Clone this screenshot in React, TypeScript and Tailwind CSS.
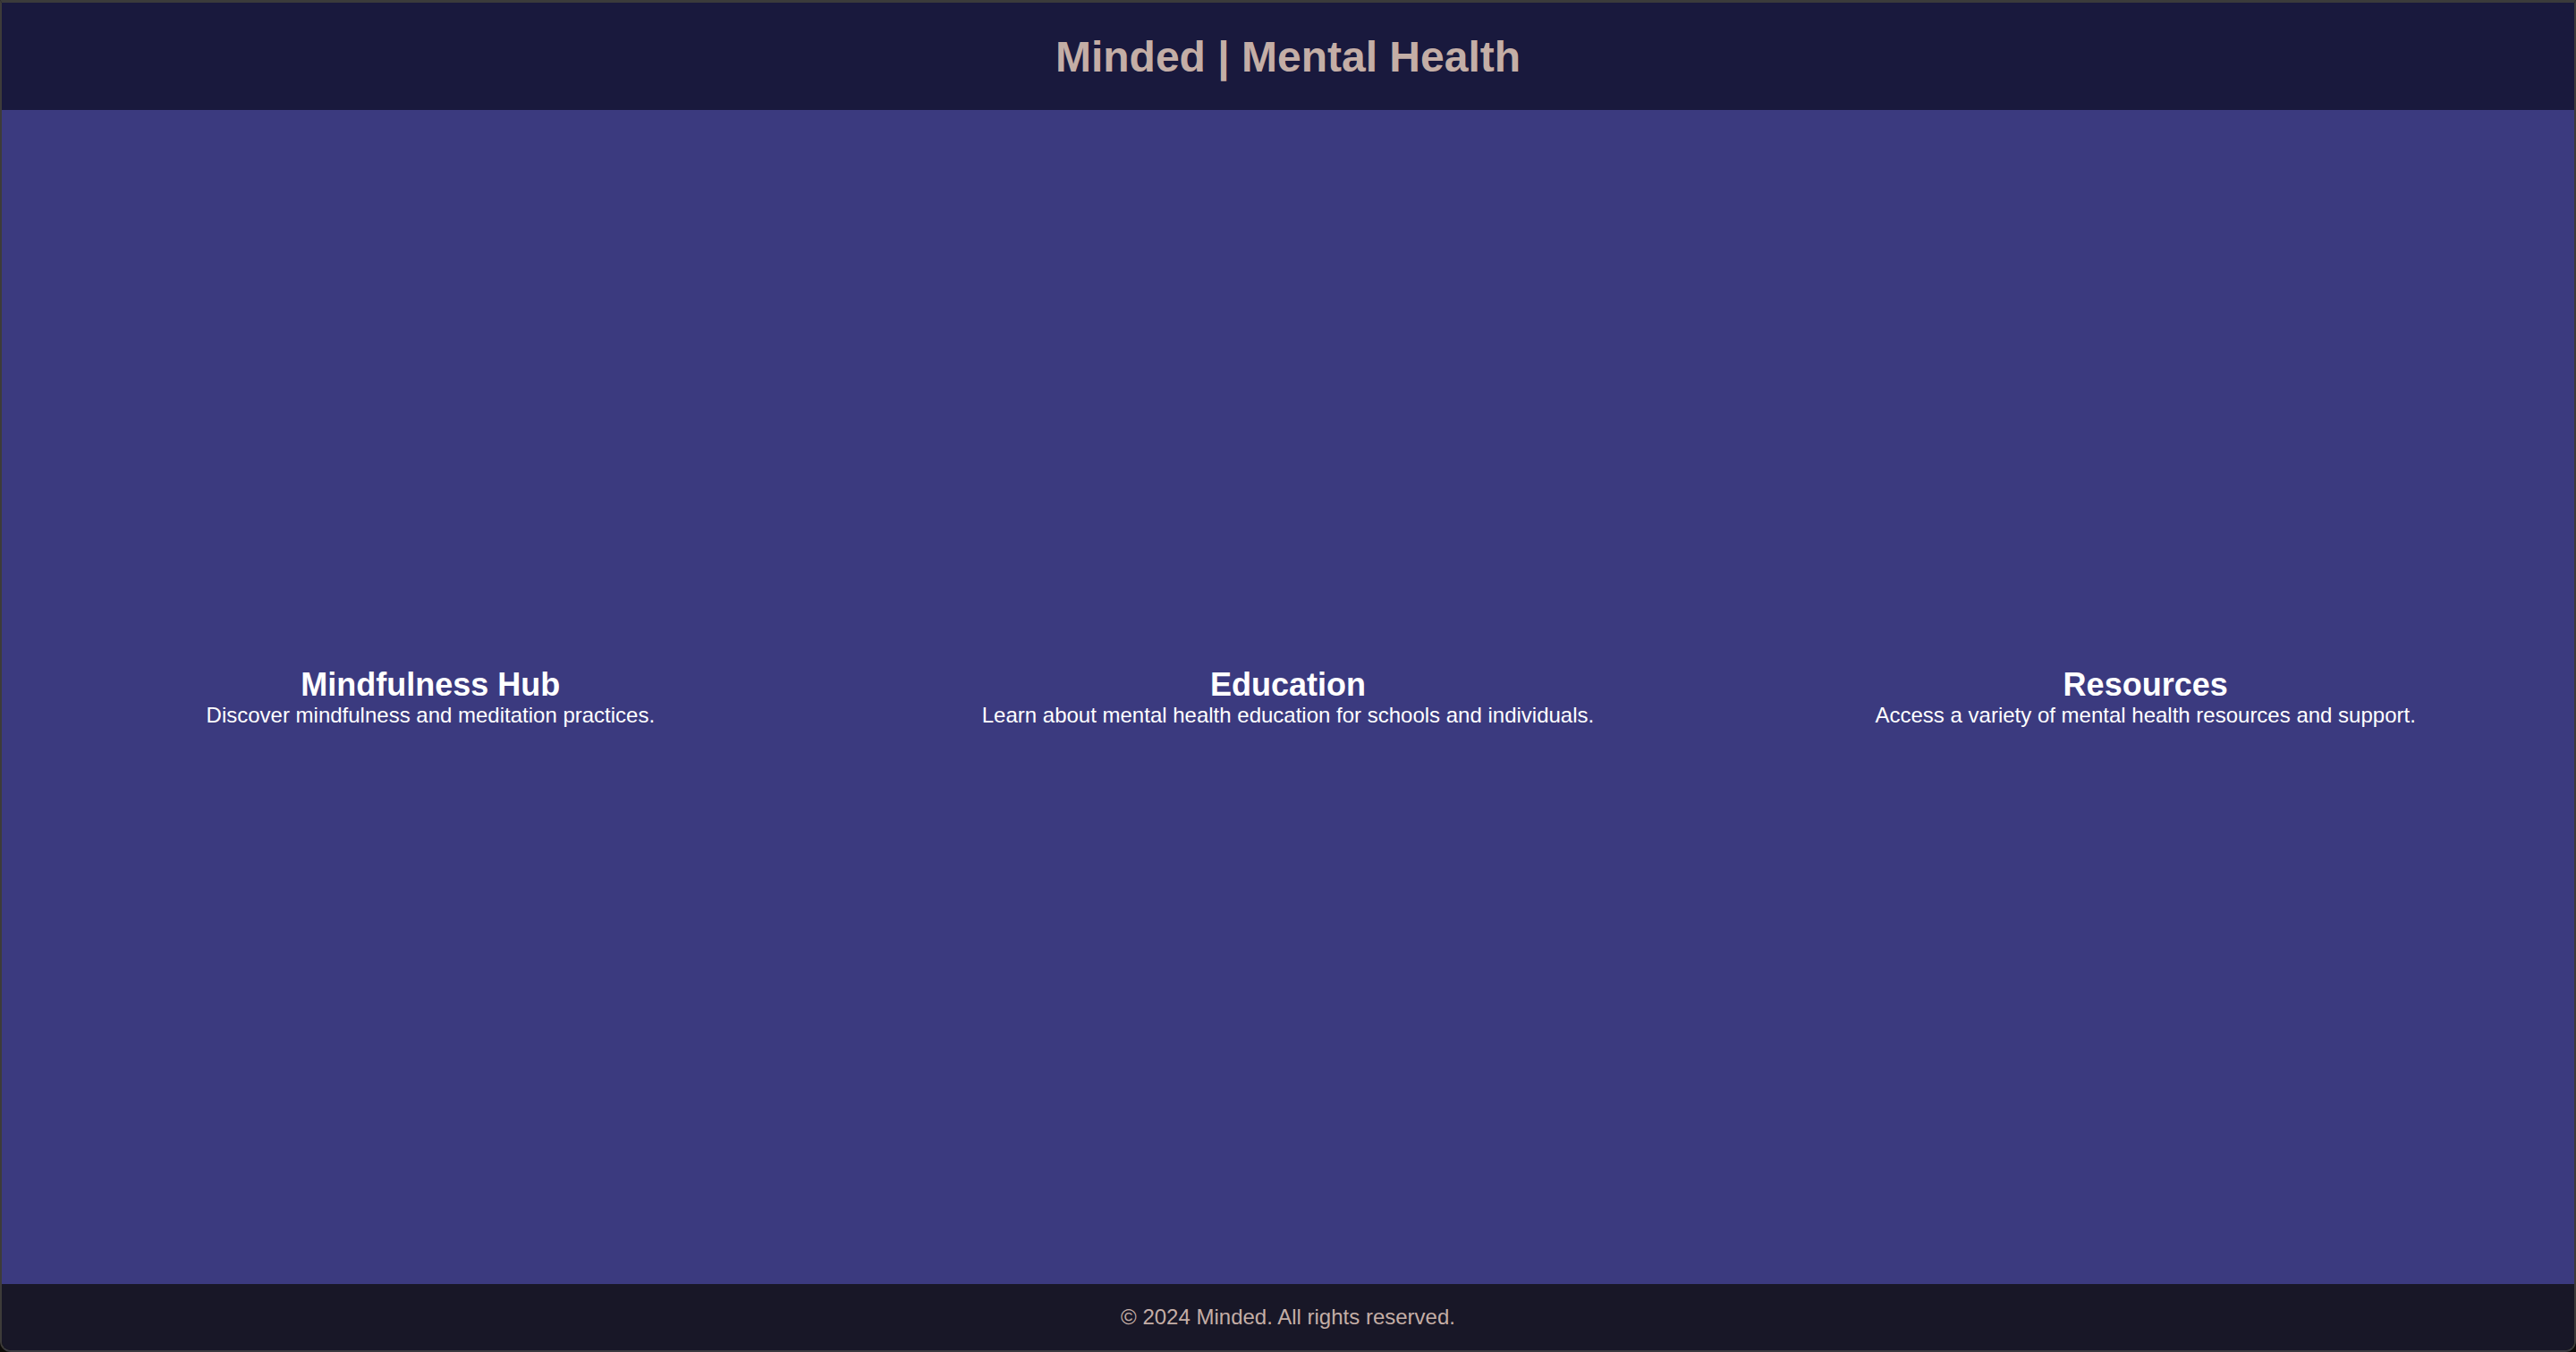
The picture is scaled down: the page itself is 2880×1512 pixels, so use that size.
import * as React from "react";

const sections = [
  {
    title: "Mindfulness Hub",
    text: "Discover mindfulness and meditation practices.",
  },
  {
    title: "Education",
    text: "Learn about mental health education for schools and individuals.",
  },
  {
    title: "Resources",
    text: "Access a variety of mental health resources and support.",
  },
];

export default function App() {
  return (
    <div className="h-[1512px] w-full bg-[#0d0b08] font-['Liberation_Sans',Arial,sans-serif]">
      {/* Window frame */}
      <div className="flex h-full flex-col overflow-hidden rounded-b-[12px] border-x-2 border-b-2 border-t-[3px] border-x-white/20 border-b-[#3a3a40] border-t-[#3b3b3b]">
        {/* Header */}
        <header className="flex h-[120px] shrink-0 items-center justify-center bg-[#19193d]">
          <h1 className="text-[48px] font-bold leading-[55px] text-[#c4aea6]">
            Minded | Mental Health
          </h1>
        </header>

        {/* Sections */}
        <main className="grid flex-1 grid-cols-3 bg-[#3b3a7f]">
          {sections.map((s) => (
            <section
              key={s.title}
              className="flex flex-col items-center justify-center text-center text-white"
            >
              <h2 className="text-[36px] font-bold leading-[41px]">{s.title}</h2>
              <p className="text-[24px] leading-[28px]">{s.text}</p>
            </section>
          ))}
        </main>

        {/* Footer */}
        <footer className="flex h-[74px] shrink-0 items-center justify-center bg-[#181727]">
          <p className="text-[24px] leading-[28px] text-[#c4aea6]">
            © 2024 Minded. All rights reserved.
          </p>
        </footer>
      </div>
    </div>
  );
}
